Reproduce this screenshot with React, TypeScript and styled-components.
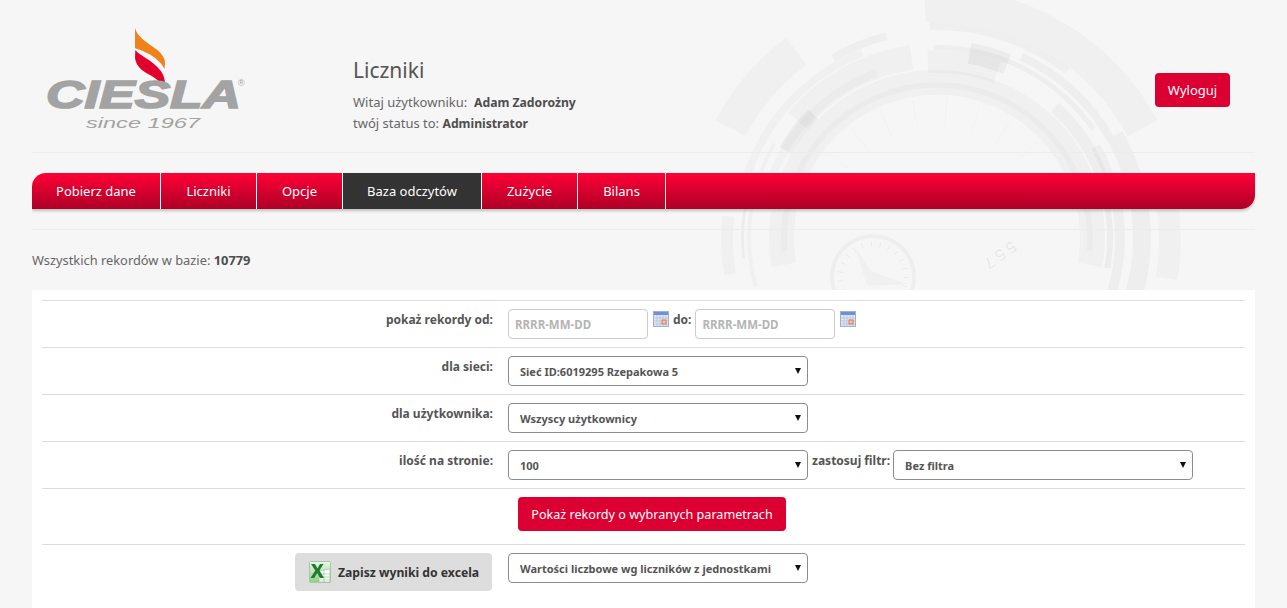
import styled, { createGlobalStyle } from 'styled-components'

const GlobalStyle = createGlobalStyle`
  html, body {
    margin: 0;
    padding: 0;
    background: #f6f6f6;
    overflow: hidden;
  }
  body {
    font-family: "Noto Sans", "Open Sans", sans-serif;
    color: #555;
  }
`

const Page = styled.div`
  width: 1223px;
  margin: 0 auto;
`

const Top = styled.section`
  position: relative;
  height: 290px;
  overflow: hidden;
`

const Backdrop = styled.svg`
  position: absolute;
  left: 0;
  top: 0;
  width: 1223px;
  height: 290px;
`

const Header = styled.header`
  position: relative;
  height: 152px;
  display: flex;
  align-items: flex-start;
  border-bottom: 1px solid #ececec;
`

const LogoBox = styled.div`
  width: 321px;
  padding-top: 27px;
  flex: none;
`

const Welcome = styled.div`
  flex: 1;
  padding-top: 56px;
`

const Title = styled.h1`
  margin: 0 0 8px;
  font-size: 21px;
  line-height: 28px;
  font-weight: 400;
  color: #555;
`

const Line = styled.p`
  margin: 0;
  font-size: 13px;
  line-height: 20px;
  color: #666;
  b {
    font-size: 12.2px;
    color: #4d4d4d;
  }
`

const Logout = styled.button`
  margin: 73px 25px 0 0;
  width: 75px;
  height: 34px;
  border: 0;
  border-radius: 4px;
  background: #dc0032;
  color: #fff;
  font: 400 13px "Noto Sans", sans-serif;
`

const Nav = styled.nav`
  position: relative;
  margin-top: 20px;
  height: 36px;
  display: flex;
  border-radius: 14px 0 14px 0;
  background: linear-gradient(#ff0036, #ad0026);
  box-shadow: 0 2px 3px rgba(0, 0, 0, 0.22);
`

const NavItem = styled.a<{ $active?: boolean; $w: number }>`
  box-sizing: border-box;
  width: ${p => p.$w}px;
  display: flex;
  align-items: center;
  justify-content: center;
  border-right: 1px solid #fff;
  font-size: 13px;
  color: #fff;
  background: ${p => (p.$active ? '#333' : 'transparent')};
`

const Divider = styled.div`
  position: relative;
  margin-top: 20px;
  border-top: 1px solid #ececec;
`

const Count = styled.p`
  position: relative;
  margin: 21px 0 0;
  font-size: 12.85px;
  line-height: 18px;
  color: #666;
  b {
    color: #4d4d4d;
  }
`

const Panel = styled.main`
  background: #fff;
  padding: 10px;
  min-height: 298px;
`

const Row = styled.div<{ $bottom?: number }>`
  display: grid;
  grid-template-columns: 466px 1fr;
  border-top: 1px solid #ddd;
  padding: 8px 0 ${p => p.$bottom ?? 8}px;
`

const Label = styled.label`
  padding: 2px 15px 0 0;
  text-align: right;
  font-size: 12px;
  line-height: 17px;
  font-weight: 700;
  color: #555;
`

const Cell = styled.div`
  display: flex;
  align-items: flex-start;
`

const LabelCell = styled(Cell)`
  justify-content: flex-end;
  padding-right: 16px;
`

const DateInput = styled.input`
  box-sizing: border-box;
  width: 140px;
  height: 30px;
  padding: 0 6px;
  border: 1px solid #ccc;
  border-radius: 4px;
  background: #fff;
  font: 700 11.5px "Noto Sans", sans-serif;
  &::placeholder {
    color: #b4b4b4;
    opacity: 1;
  }
`

const Inline = styled.span`
  padding-top: 2px;
  font-size: 12px;
  line-height: 17px;
  font-weight: 700;
  color: #555;
  white-space: nowrap;
`

const DoLabel = styled(Inline)`
  margin: 0 4px 0 4px;
`

const FilterLabel = styled(Inline)`
  margin: 0 3px 0 4px;
`

const CalendarBox = styled.span`
  display: flex;
  margin: 2px 0 0 5px;
  height: 16px;
`

const SelectWrap = styled.span`
  position: relative;
  display: block;
  width: 300px;
  height: 30px;
  &::after {
    content: "";
    position: absolute;
    right: 7px;
    top: 12px;
    border-style: solid;
    border-width: 6px 3px 0;
    border-color: #111 transparent transparent;
    pointer-events: none;
  }
`

const Select = styled.select`
  box-sizing: border-box;
  width: 100%;
  height: 30px;
  padding: 0 0 0 11px;
  border: 1px solid #8c8c8c;
  border-radius: 4px;
  background: #fff;
  appearance: none;
  font: 700 11px "Noto Sans", sans-serif;
  color: #555;
`

const Submit = styled.button`
  margin-left: 10px;
  width: 268px;
  height: 34px;
  border: 0;
  border-radius: 4px;
  background: #dc0032;
  color: #fff;
  font: 400 12.6px "Noto Sans", sans-serif;
`

const ExcelButton = styled.button`
  width: 197px;
  height: 38px;
  display: flex;
  align-items: center;
  gap: 7px;
  padding: 0 0 0 14px;
  border: 0;
  border-radius: 4px;
  background: #dddddd;
  color: #333;
  font: 700 12.2px "Noto Sans", sans-serif;
  white-space: nowrap;
`

const sector = (r1: number, r2: number, a: number, b: number) => {
  const cx = 937
  const cy = 238
  const pt = (r: number, d: number) => {
    const t = (d * Math.PI) / 180
    return `${(cx + r * Math.sin(t)).toFixed(1)} ${(cy - r * Math.cos(t)).toFixed(1)}`
  }
  const large = b - a > 180 ? 1 : 0
  return `M${pt(r2, a)}A${r2} ${r2} 0 ${large} 1 ${pt(r2, b)}L${pt(r1, b)}A${r1} ${r1} 0 ${large} 0 ${pt(r1, a)}Z`
}

// r1, r2, from, to, opacity of the grey
const arcs: [number, number, number, number, number][] = [
  [216, 250, -3, 62, 0.025],
  [217, 251, -62, -37, 0.025],
  [170, 195, -50, -8, 0.022],
  [165, 188, -3, 20, 0.022],
  [143, 168, -100, 100, 0.025],
  [150, 156, -95, 95, 0.02],
  [172, 180, -70, -20, 0.02],
  [196, 204, -72, -22, 0.025],
  [204, 212, -30, -14, 0.03],
  [208, 216, -2, 38, 0.028],
  [188, 193, -1, 55, 0.03],
  [170, 182, 42, 70, 0.03],
  [196, 204, 25, 60, 0.03],
  [168, 182, -60, -45, 0.04],
  [177, 198, 10, 22, 0.04],
  [178, 188, 60, 120, 0.03],
  [196, 214, 60, 120, 0.03],
  [222, 244, 82, 100, 0.025],
  [170, 176, 78, 100, 0.04],
  [186, 190, -105, -60, 0.025],
  [204, 216, -100, -84, 0.025],
  [193, 196, -96, -80, 0.04],
]

const ticks = [-52, -38, -24, -10, 4, 18, 32, 46, 60]

function Background() {
  return (
    <Backdrop viewBox="32 0 1223 290">
      {arcs.map(([r1, r2, a, b, o], i) => (
        <path key={i} d={sector(r1, r2, a, b)} fill="#000" fillOpacity={o} />
      ))}
      {ticks.map(d => {
        const t = (d * Math.PI) / 180
        return (
          <line
            key={d}
            x1={937 + 140 * Math.sin(t)}
            y1={238 - 140 * Math.cos(t)}
            x2={937 + 110 * Math.sin(t)}
            y2={238 - 110 * Math.cos(t)}
            stroke="#000"
            strokeOpacity="0.02"
          />
        )
      })}
      <circle cx="873" cy="277" r="41" fill="none" stroke="#000" strokeOpacity="0.03" strokeWidth="4" />
      <circle cx="873" cy="277" r="33" fill="none" stroke="#000" strokeOpacity="0.05" strokeDasharray="1 8" strokeWidth="5" />
      <path d="M855 247l16 24 36 13-40 2z" fill="#000" fillOpacity="0.025" />
      <text
        transform="translate(1012 240) rotate(145)"
        fontFamily="'Liberation Mono', monospace"
        fontSize="17"
        letterSpacing="3"
        fill="#000"
        fillOpacity="0.08"
      >
        557
      </text>
    </Backdrop>
  )
}

function Logo() {
  return (
    <svg width="215" height="106" viewBox="32 27 215 106">
      <path
        d="M135 28C137 37 148 43 156 49C162 54 165 58 165 63L164.500 69C161 62 155 57 147 53C141 50 137 49 135 48Z"
        fill="#ef8218"
      />
      <path
        d="M135.300 50C140 56 152 60 160 70C164 75 165 80 165 84L164 90C161 82 157 79 150 75C142 71 136 66 135 58Z"
        fill="#e2002e"
      />
      <text
        x="46"
        y="108"
        textLength="195"
        lengthAdjust="spacingAndGlyphs"
        fontFamily="'Liberation Sans', sans-serif"
        fontWeight="700"
        fontStyle="italic"
        fontSize="38"
        stroke="#a3a3a3"
        strokeWidth="1.600"
        fill="#a3a3a3"
      >
        CIESLA
      </text>
      <text x="238" y="86" fontFamily="'Liberation Sans', sans-serif" fontSize="9" fill="#a3a3a3">
        ®
      </text>
      <text
        x="86"
        y="128"
        textLength="114"
        lengthAdjust="spacingAndGlyphs"
        fontFamily="'Liberation Sans', sans-serif"
        fontStyle="italic"
        fontSize="15"
        fill="#a3a3a3"
      >
        since 1967
      </text>
    </svg>
  )
}

function CalendarIcon() {
  return (
    <svg width="16" height="16" viewBox="0 0 16 16">
      <rect x="0.500" y="0.500" width="15" height="15" fill="#dfe6f4" stroke="#9db0d6" />
      <rect x="1" y="1" width="14" height="3" fill="#6f90d6" />
      <path d="M1 7h14M1 10h14M1 13h14M4 4v11M7 4v11M10 4v11M13 4v11" stroke="#b4bed6" strokeWidth="0.700" />
      <rect x="9" y="9" width="4" height="4" fill="#f0c6a8" stroke="#d9663f" strokeWidth="0.800" />
    </svg>
  )
}

function ExcelIcon() {
  return (
    <svg width="22" height="22" viewBox="0 0 22 22">
      <defs>
        <linearGradient id="xl" x1="0" y1="0" x2="0" y2="1">
          <stop offset="0" stopColor="#eef7ea" />
          <stop offset="1" stopColor="#8fcf83" />
        </linearGradient>
      </defs>
      <rect x="0.500" y="0.500" width="21" height="21" rx="1" fill="url(#xl)" stroke="#a8c8a4" />
      <path d="M10 10l11-2v13H10z" fill="#fff" stroke="#8fbf8d" strokeWidth="0.600" />
      <path d="M10 13h11M10 16h11M10 19h11M15 9v12" stroke="#8fbf8d" strokeWidth="0.600" />
      <path d="M2 3h4l2.500 4.500L11 3h3.500l-4 6.500 4.500 7.500h-4l-2.800-5-2.900 5H1.500l4.800-7.500z" fill="#1f7d2e" />
    </svg>
  )
}

function Dropdown({ value }: { value: string }) {
  return (
    <SelectWrap>
      <Select defaultValue={value}>
        <option>{value}</option>
      </Select>
    </SelectWrap>
  )
}

const menu = [
  { name: 'Pobierz dane', w: 129 },
  { name: 'Liczniki', w: 96 },
  { name: 'Opcje', w: 86 },
  { name: 'Baza odczytów', w: 139, active: true },
  { name: 'Zużycie', w: 96 },
  { name: 'Bilans', w: 88 },
]

export default function App() {
  return (
    <Page>
      <GlobalStyle />
      <Top>
        <Background />
        <Header>
          <LogoBox>
            <Logo />
          </LogoBox>
          <Welcome>
            <Title>Liczniki</Title>
            <Line>
              Witaj użytkowniku:&nbsp; <b>Adam Zadorożny</b>
            </Line>
            <Line>
              twój status to: <b>Administrator</b>
            </Line>
          </Welcome>
          <Logout>Wyloguj</Logout>
        </Header>
        <Nav>
          {menu.map(item => (
            <NavItem key={item.name} $w={item.w} $active={item.active}>
              {item.name}
            </NavItem>
          ))}
        </Nav>
        <Divider />
        <Count>
          Wszystkich rekordów w bazie: <b>10779</b>
        </Count>
      </Top>
      <Panel>
        <Row>
          <Label>pokaż rekordy od:</Label>
          <Cell>
            <DateInput placeholder="RRRR-MM-DD" />
            <CalendarBox>
              <CalendarIcon />
            </CalendarBox>
            <DoLabel>do:</DoLabel>
            <DateInput placeholder="RRRR-MM-DD" />
            <CalendarBox>
              <CalendarIcon />
            </CalendarBox>
          </Cell>
        </Row>
        <Row>
          <Label>dla sieci:</Label>
          <Cell>
            <Dropdown value="Sieć ID:6019295 Rzepakowa 5" />
          </Cell>
        </Row>
        <Row>
          <Label>dla użytkownika:</Label>
          <Cell>
            <Dropdown value="Wszyscy użytkownicy" />
          </Cell>
        </Row>
        <Row>
          <Label>ilość na stronie:</Label>
          <Cell>
            <Dropdown value="100" />
            <FilterLabel>zastosuj filtr:</FilterLabel>
            <Dropdown value="Bez filtra" />
          </Cell>
        </Row>
        <Row $bottom={13}>
          <span />
          <Cell>
            <Submit>Pokaż rekordy o wybranych parametrach</Submit>
          </Cell>
        </Row>
        <Row>
          <LabelCell>
            <ExcelButton>
              <ExcelIcon />
              Zapisz wyniki do excela
            </ExcelButton>
          </LabelCell>
          <Cell>
            <Dropdown value="Wartości liczbowe wg liczników z jednostkami" />
          </Cell>
        </Row>
      </Panel>
    </Page>
  )
}
